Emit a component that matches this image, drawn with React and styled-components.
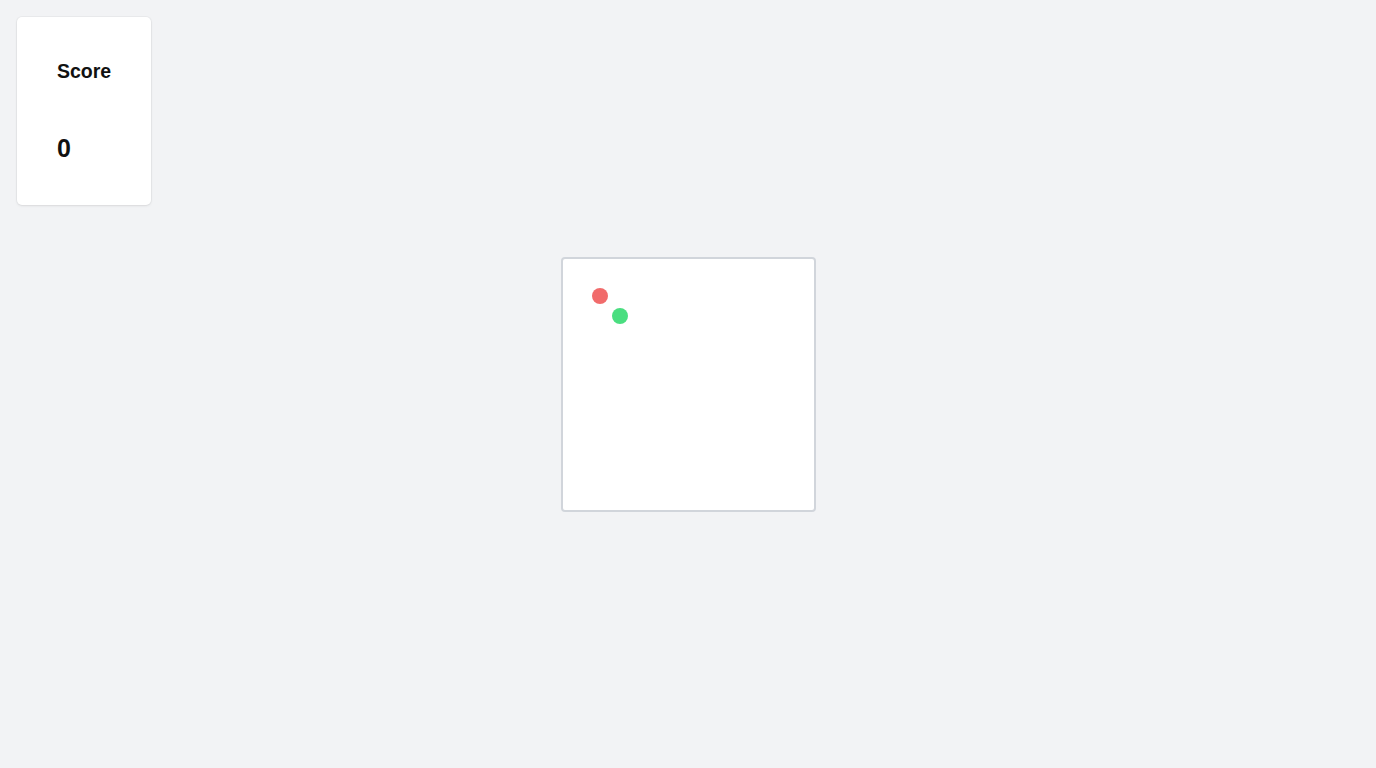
import React from "react";
import styled, { createGlobalStyle } from "styled-components";

const snake = [{ x: 29, y: 29, color: "#f16b6b" }];
const food = { x: 49, y: 49, color: "#4ade80" };

const App = () => {
  return (
    <Page>
      <GlobalStyle />
      <ScoreCard>
        <ScoreTitle>Score</ScoreTitle>
        <ScoreValue>0</ScoreValue>
      </ScoreCard>
      <Board>
        {snake.map((s, i) => (
          <Dot key={i} color={s.color} style={{ left: s.x, top: s.y }} />
        ))}
        <Dot color={food.color} style={{ left: food.x, top: food.y }} />
      </Board>
    </Page>
  );
};

export default App;

const GlobalStyle = createGlobalStyle`
  html, body {
    margin: 0;
    padding: 0;
    background: #f2f3f5;
    font-family: "Liberation Sans", Arial, sans-serif;
  }
`;

const Page = styled.div`
  display: grid;
  grid-template-areas: "main";
  height: 100vh;
  padding: 17px;
  box-sizing: border-box;
`;

const ScoreCard = styled.div`
  grid-area: main;
  justify-self: start;
  align-self: start;
  display: flex;
  flex-direction: column;
  padding: 43px 40px 42px;
  background: #fff;
  border-radius: 5px;
  box-shadow: 0 1px 3px rgba(0, 0, 0, 0.08), 0 0 0 1px rgba(0, 0, 0, 0.03);
`;

const ScoreTitle = styled.div`
  font-size: 19.5px;
  font-weight: 700;
  color: #111;
`;

const ScoreValue = styled.div`
  margin-top: 51px;
  font-size: 25px;
  font-weight: 700;
  color: #111;
`;

const Board = styled.div`
  grid-area: main;
  place-self: center;
  position: relative;
  width: 251px;
  height: 251px;
  background: #fff;
  border: 2px solid #d1d5db;
  border-radius: 4px;
`;

const Dot = styled.div`
  position: absolute;
  width: 16px;
  height: 16px;
  border-radius: 50%;
  background: ${(p) => p.color};
`;
